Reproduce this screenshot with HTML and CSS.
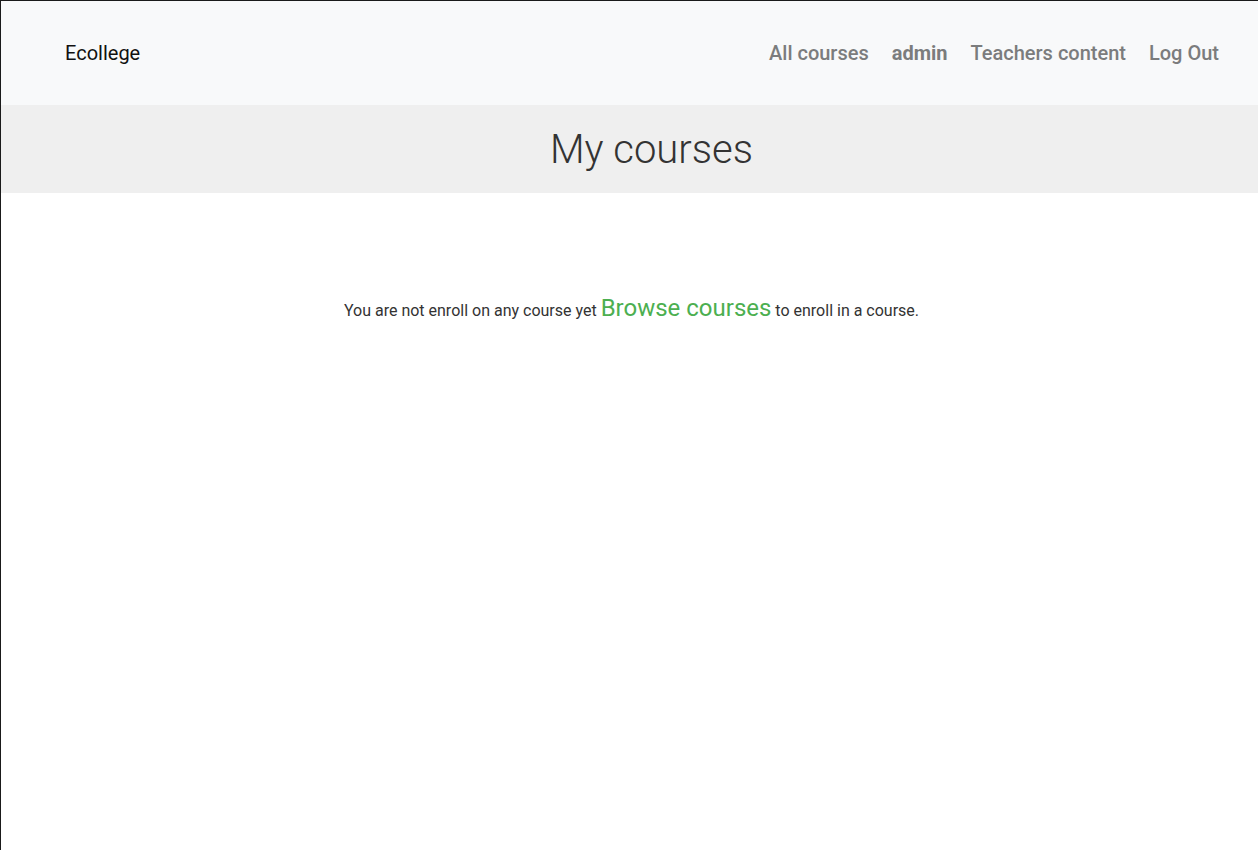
FILE: index.html
```html
<!DOCTYPE html>
<html>
<head>
<meta charset="utf-8">
<link rel="stylesheet" href="styles.css">
</head>
<body>
<div class="frame">
  <nav class="navbar">
    <a class="brand" href="#">Ecollege</a>
    <ul class="nav">
      <li><a href="#">All courses</a></li>
      <li><a href="#" class="bold">admin</a></li>
      <li><a href="#">Teachers content</a></li>
      <li><a href="#">Log Out</a></li>
    </ul>
  </nav>
  <header class="page-head">
    <h1>My courses</h1>
  </header>
  <main class="content">
    <p class="msg">You are not enroll on any course yet <a href="#" class="browse">Browse courses</a> to enroll in a course.</p>
  </main>
</div>
</body>
</html>
```

FILE: styles.css
```css
html, body {
  margin: 0;
  padding: 0;
  height: 100%;
}
body {
  font-family: Roboto, "Liberation Sans", sans-serif;
  color: #333;
  background: #fff;
}
.frame {
  min-height: 100%;
  box-sizing: border-box;
  border-top: 1px solid #1a1a1a;
  border-left: 1px solid #1a1a1a;
}
.navbar {
  height: 104px;
  background: #f8f9fa;
  display: flex;
  align-items: center;
  justify-content: space-between;
  padding: 0 39px 0 64px;
}
.brand {
  font-size: 20px;
  color: #111;
  text-decoration: none;
}
.nav {
  list-style: none;
  margin: 0;
  padding: 0;
  display: flex;
  gap: 23px;
}
.nav a {
  font-size: 20px;
  font-weight: 500;
  color: #7b7c7d;
  text-decoration: none;
}
.nav a.bold {
  font-weight: 700;
}
.page-head {
  background: #efefef;
  height: 88px;
  display: flex;
  align-items: center;
  justify-content: center;
  padding-left: 42px;
}
.page-head h1 {
  margin: 0;
  font-size: 40px;
  font-weight: 300;
  color: #333;
  margin-left: 2px;
}
.content {
  padding-top: 101px;
  text-align: center;
}
.msg {
  margin: 0;
  font-size: 16px;
  color: #333;
  margin-left: 4px;
}
.browse {
  font-size: 24px;
  color: #4caf50;
  text-decoration: none;
}
```
